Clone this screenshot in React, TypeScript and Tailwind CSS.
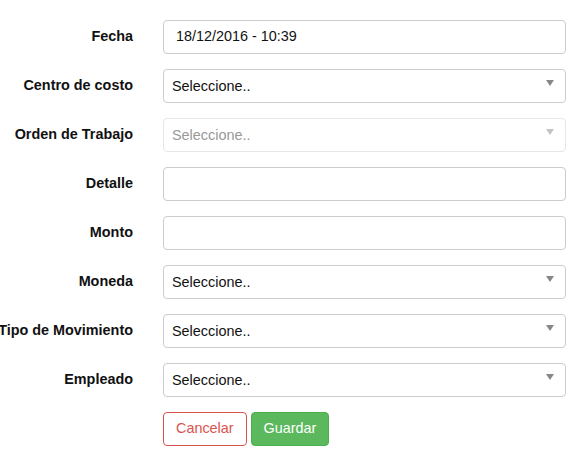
import React from 'react';

type Field = {
  label: string;
  kind: 'text' | 'select';
  value?: string;
  disabled?: boolean;
};

const fields: Field[] = [
  { label: 'Fecha', kind: 'text', value: '18/12/2016 - 10:39' },
  { label: 'Centro de costo', kind: 'select' },
  { label: 'Orden de Trabajo', kind: 'select', disabled: true },
  { label: 'Detalle', kind: 'text' },
  { label: 'Monto', kind: 'text' },
  { label: 'Moneda', kind: 'select' },
  { label: 'Tipo de Movimiento', kind: 'select' },
  { label: 'Empleado', kind: 'select' },
];

function Caret({ disabled }: { disabled?: boolean }) {
  return (
    <svg width="8" height="6" viewBox="0 0 8 6" className="absolute right-[11px] top-[10px]">
      <path d="M0 0 L8 0 L4 6 Z" fill={disabled ? '#c4c4c4' : '#888888'} />
    </svg>
  );
}

function Control({ field }: { field: Field }) {
  if (field.kind === 'text') {
    return (
      <div className="h-[34px] w-full rounded-[4px] border border-[#cccccc] bg-white px-3 flex items-center text-[14.4px] text-[#111]">
        {field.value ?? ''}
      </div>
    );
  }
  return (
    <div
      className={`relative h-[34px] w-full rounded-[4px] border bg-white pl-2 flex items-center text-[14.4px] ${
        field.disabled ? 'border-[#e6e6e6] text-[#999]' : 'border-[#cccccc] text-[#111]'
      }`}
    >
      <span className="pt-px">Seleccione..</span>
      <Caret disabled={field.disabled} />
    </div>
  );
}

export default function App() {
  return (
    <div
      className="w-[582px] h-[455px] bg-white overflow-hidden pt-5"
      style={{ fontFamily: '"Liberation Sans", Arial, sans-serif' }}
    >
      <div className="flex flex-col gap-[15px]">
        {fields.map((f) => (
          <div key={f.label} className="flex items-center">
            <div className="w-[133px] shrink-0 flex justify-end">
              <span className="whitespace-nowrap text-[14.4px] font-bold text-[#111]">{f.label}</span>
            </div>
            <div className="ml-[30px] w-[403px]">
              <Control field={f} />
            </div>
          </div>
        ))}
        <div className="flex gap-1 ml-[163px]">
          <button className="h-[34px] px-3 rounded-[4px] border border-[#d9534f] bg-white text-[14.4px] text-[#d9534f]">
            Cancelar
          </button>
          <button className="h-[34px] px-3 rounded-[4px] border border-[#4cae4c] bg-[#5cb85c] text-[14.4px] text-white">
            Guardar
          </button>
        </div>
      </div>
    </div>
  );
}
